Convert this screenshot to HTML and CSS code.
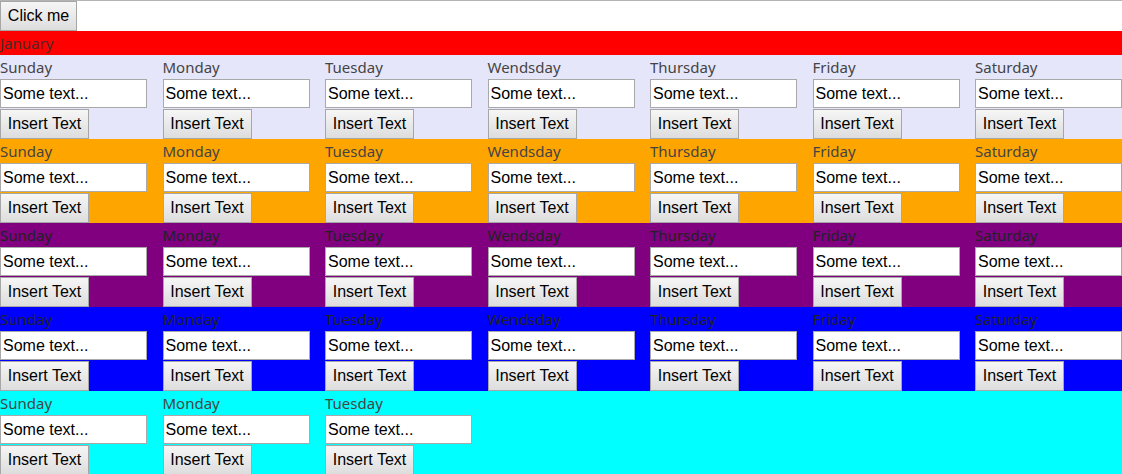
FILE: index.html
```html
<!DOCTYPE html>
<html>
<head>
<meta charset="utf-8">
<link rel="stylesheet" href="styles.css">
</head>
<body>
<div class="top"><button class="btn click">Click me</button></div>
<div class="month">January</div>
<div class="week lavender">
  <div class="cell"><label>Sunday</label><input class="inp" value="Some text..."><button class="btn">Insert Text</button></div>
  <div class="cell"><label>Monday</label><input class="inp" value="Some text..."><button class="btn">Insert Text</button></div>
  <div class="cell"><label>Tuesday</label><input class="inp" value="Some text..."><button class="btn">Insert Text</button></div>
  <div class="cell"><label>Wendsday</label><input class="inp" value="Some text..."><button class="btn">Insert Text</button></div>
  <div class="cell"><label>Thursday</label><input class="inp" value="Some text..."><button class="btn">Insert Text</button></div>
  <div class="cell"><label>Friday</label><input class="inp" value="Some text..."><button class="btn">Insert Text</button></div>
  <div class="cell"><label>Saturday</label><input class="inp" value="Some text..."><button class="btn">Insert Text</button></div>
</div>
<div class="week orange">
  <div class="cell"><label>Sunday</label><input class="inp" value="Some text..."><button class="btn">Insert Text</button></div>
  <div class="cell"><label>Monday</label><input class="inp" value="Some text..."><button class="btn">Insert Text</button></div>
  <div class="cell"><label>Tuesday</label><input class="inp" value="Some text..."><button class="btn">Insert Text</button></div>
  <div class="cell"><label>Wendsday</label><input class="inp" value="Some text..."><button class="btn">Insert Text</button></div>
  <div class="cell"><label>Thursday</label><input class="inp" value="Some text..."><button class="btn">Insert Text</button></div>
  <div class="cell"><label>Friday</label><input class="inp" value="Some text..."><button class="btn">Insert Text</button></div>
  <div class="cell"><label>Saturday</label><input class="inp" value="Some text..."><button class="btn">Insert Text</button></div>
</div>
<div class="week purple">
  <div class="cell"><label>Sunday</label><input class="inp" value="Some text..."><button class="btn">Insert Text</button></div>
  <div class="cell"><label>Monday</label><input class="inp" value="Some text..."><button class="btn">Insert Text</button></div>
  <div class="cell"><label>Tuesday</label><input class="inp" value="Some text..."><button class="btn">Insert Text</button></div>
  <div class="cell"><label>Wendsday</label><input class="inp" value="Some text..."><button class="btn">Insert Text</button></div>
  <div class="cell"><label>Thursday</label><input class="inp" value="Some text..."><button class="btn">Insert Text</button></div>
  <div class="cell"><label>Friday</label><input class="inp" value="Some text..."><button class="btn">Insert Text</button></div>
  <div class="cell"><label>Saturday</label><input class="inp" value="Some text..."><button class="btn">Insert Text</button></div>
</div>
<div class="week blue">
  <div class="cell"><label>Sunday</label><input class="inp" value="Some text..."><button class="btn">Insert Text</button></div>
  <div class="cell"><label>Monday</label><input class="inp" value="Some text..."><button class="btn">Insert Text</button></div>
  <div class="cell"><label>Tuesday</label><input class="inp" value="Some text..."><button class="btn">Insert Text</button></div>
  <div class="cell"><label>Wendsday</label><input class="inp" value="Some text..."><button class="btn">Insert Text</button></div>
  <div class="cell"><label>Thursday</label><input class="inp" value="Some text..."><button class="btn">Insert Text</button></div>
  <div class="cell"><label>Friday</label><input class="inp" value="Some text..."><button class="btn">Insert Text</button></div>
  <div class="cell"><label>Saturday</label><input class="inp" value="Some text..."><button class="btn">Insert Text</button></div>
</div>
<div class="week cyan">
  <div class="cell"><label>Sunday</label><input class="inp" value="Some text..."><button class="btn">Insert Text</button></div>
  <div class="cell"><label>Monday</label><input class="inp" value="Some text..."><button class="btn">Insert Text</button></div>
  <div class="cell"><label>Tuesday</label><input class="inp" value="Some text..."><button class="btn">Insert Text</button></div>
</div>
</body>
</html>
```
FILE: styles.css
```css
html, body { margin: 0; padding: 0; }
body {
  border-top: 1px solid #b4b4b4;
  overflow: hidden;
  font-family: "Noto Sans", "Open Sans", sans-serif;
}
.top { height: 30px; background: #fff; }
.btn {
  font-family: "Liberation Sans", Arial, sans-serif;
  font-size: 16px;
  color: #000;
  height: 30px;
  padding: 0 8px;
  margin: 0;
  border: 1px solid #a6a6a6;
  border-radius: 0;
  background: linear-gradient(#f6f6f6, #dddddd);
  box-sizing: border-box;
  white-space: nowrap;
}
.click { width: 77px; height: 30px; padding: 0; }
.month {
  background: #ff0000;
  height: 24px;
  line-height: 24px;
  font-size: 15px;
  color: #4a2a2a;
}
.week {
  display: grid;
  grid-template-columns: repeat(7, 162.5px);
  height: 84px;
  overflow: hidden;
}
.lavender { background: #e6e6fa; }
.orange { background: #ffa500; }
.purple { background: #800080; }
.blue { background: #0000ff; }
.cyan { background: #00ffff; height: 90px; }
.cell {
  display: flex;
  flex-direction: column;
  align-items: flex-start;
}
.cell label {
  display: block;
  height: 24px;
  line-height: 24px;
  font-size: 15px;
  color: #444;
}
.purple .cell label, .blue .cell label { color: #222; }
.inp {
  width: 147px;
  height: 29px;
  box-sizing: border-box;
  margin: 0 0 1px 0;
  border: 1px solid #a9a9a9;
  padding: 0 2px;
  font-family: "Liberation Sans", Arial, sans-serif;
  font-size: 16px;
  color: #000;
  background: #fff;
  outline: none;
}
.cell .btn { width: 89px; padding: 0; }
```
